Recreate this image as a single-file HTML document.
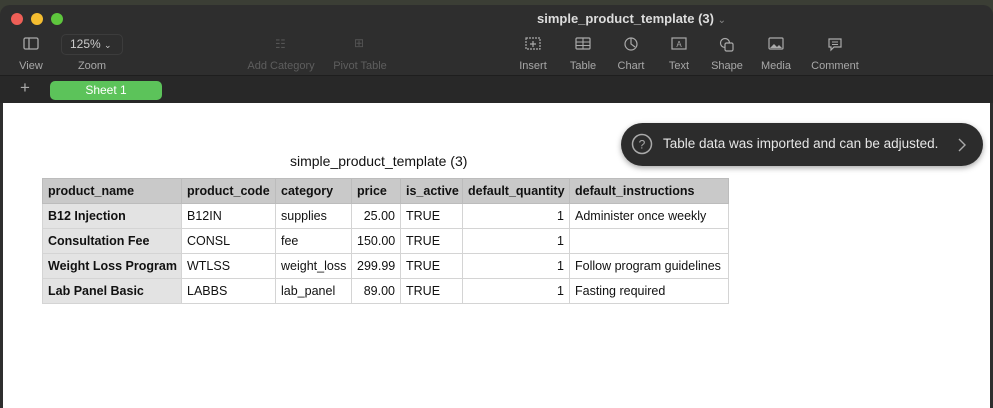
<!DOCTYPE html>
<html><head><style>
*{margin:0;padding:0;box-sizing:border-box}
body{width:993px;height:408px;overflow:hidden;background:#3b3e35;font-family:"Liberation Sans",sans-serif;position:relative}
.win{position:absolute;left:0;top:5px;width:993px;height:403px;background:#2e2e2e;border-radius:10px 10px 0 0;overflow:hidden}
.dot{position:absolute;top:8px;width:12px;height:12px;border-radius:50%}
.title{position:absolute;left:537px;top:6px;color:#ddd;font-weight:bold;font-size:13px}
.lbl{position:absolute;top:55px;font-size:11px;color:#a8a8a8;transform:translateX(-50%);white-space:nowrap}
.lbl.dim{color:#5e5e5e}
.ic{position:absolute;top:32px;transform:translateX(-50%)}
.tabbar{position:absolute;left:0;top:70px;width:993px;height:28px;background:#282828;border-top:1px solid #1e1e1e}
.sheet{position:absolute;left:50px;top:5px;width:112px;height:19px;background:#5cc35a;border-radius:5px;color:#fff;font-size:12px;text-align:center;line-height:19px}
.content{position:absolute;left:3px;top:98px;width:987px;height:310px;background:#fff}
table{position:absolute;left:39px;top:75px;border-collapse:collapse;font-size:12.5px;color:#111;table-layout:fixed;width:686px}
td{height:25px;border:1px solid #d4d4d4;padding:0 5px;white-space:nowrap;overflow:visible}
tr.h td{background:#c9c9c9;font-weight:bold;border-color:#bcbcbc}
td.f{background:#e3e3e3;font-weight:bold}
.r{text-align:right}
.toast{position:absolute;left:618px;top:20px;width:362px;height:43px;background:#2c2c2c;border-radius:22px;box-shadow:0 2px 6px rgba(0,0,0,.35);color:#e6e6e6;font-size:13.5px}
</style></head><body>
<div class="win">
<div class="dot" style="left:11px;background:#ee5f57"></div>
<div class="dot" style="left:31px;background:#f4bd30"></div>
<div class="dot" style="left:51px;background:#5ec63d"></div>
<div class="title">simple_product_template (3) <span style="color:#888;font-weight:normal;font-size:10px">⌄</span></div>
<svg class="ic" style="left:31px" width="16" height="14"><rect x="1" y="1" width="14" height="11" rx="1.5" fill="none" stroke="#aaa" stroke-width="1.3"/><line x1="6" y1="1" x2="6" y2="12" stroke="#aaa" stroke-width="1.3"/></svg>
<div style="position:absolute;left:61px;top:29px;width:62px;height:21px;border:1px solid #3c3c3c;border-radius:5px;color:#ccc;font-size:12px;line-height:19px;padding-left:8px">125% <span style="font-size:9px">⌄</span></div>
<div class="lbl" style="left:31px">View</div><div class="lbl" style="left:92px">Zoom</div>
<div class="lbl dim" style="left:281px">Add Category</div><div class="lbl dim" style="left:360px">Pivot Table</div>
<div style="position:absolute;left:275px;top:32px;color:#555;font-size:12px">☷</div>
<div style="position:absolute;left:354px;top:31px;color:#555;font-size:12px">⊞</div>
<svg class="ic" style="left:533px" width="16" height="14"><rect x="1" y="1" width="14" height="11" fill="none" stroke="#aaa" stroke-width="1.2" stroke-dasharray="2 1"/><path d="M8 4v6M5 7h6" stroke="#aaa" stroke-width="1.2"/></svg>
<svg class="ic" style="left:583px" width="16" height="14"><rect x="1" y="1" width="14" height="11" rx="1" fill="none" stroke="#aaa" stroke-width="1.2"/><path d="M1 5h14M1 8.5h14M8 1v11" stroke="#aaa" stroke-width="1.1"/></svg>
<svg class="ic" style="left:631px" width="16" height="14"><circle cx="8" cy="7" r="6" fill="none" stroke="#aaa" stroke-width="1.2"/><path d="M8 1v6l4 3" fill="none" stroke="#aaa" stroke-width="1.2"/></svg>
<svg class="ic" style="left:679px" width="16" height="14"><rect x="1" y="1" width="14" height="11" fill="none" stroke="#aaa" stroke-width="1.2"/><text x="8" y="10" font-size="8" fill="#aaa" text-anchor="middle" font-family="Liberation Sans">A</text></svg>
<svg class="ic" style="left:727px" width="16" height="16"><circle cx="6" cy="6" r="4.5" fill="none" stroke="#aaa" stroke-width="1.2"/><rect x="6" y="6" width="8" height="8" rx="1.5" fill="#2e2e2e" stroke="#aaa" stroke-width="1.2"/></svg>
<svg class="ic" style="left:776px" width="16" height="14"><rect x="1" y="1" width="14" height="11" rx="1" fill="none" stroke="#aaa" stroke-width="1.2"/><path d="M2 11l4-4 3 3 2-2 3 3z" fill="#aaa"/></svg>
<svg class="ic" style="left:835px" width="16" height="15"><path d="M2 2h12v8H7l-3 3v-3H2z" fill="none" stroke="#aaa" stroke-width="1.2"/><path d="M5 5h6M5 7.5h6" stroke="#aaa"/></svg>
<div class="lbl" style="left:533px">Insert</div><div class="lbl" style="left:583px">Table</div><div class="lbl" style="left:631px">Chart</div><div class="lbl" style="left:679px">Text</div><div class="lbl" style="left:727px">Shape</div><div class="lbl" style="left:776px">Media</div><div class="lbl" style="left:835px">Comment</div>
<div class="tabbar"><div style="position:absolute;left:20px;top:2px;color:#aaa;font-size:17px">+</div><div class="sheet">Sheet 1</div></div>
<div class="content">
<div style="position:absolute;left:287px;top:50px;font-size:14px;color:#111">simple_product_template (3)</div>
<table>
<colgroup><col style="width:139px"><col style="width:94px"><col style="width:76px"><col style="width:49px"><col style="width:62px"><col style="width:107px"><col style="width:159px"></colgroup>
<tr class="h"><td>product_name</td><td>product_code</td><td>category</td><td>price</td><td>is_active</td><td>default_quantity</td><td>default_instructions</td></tr>
<tr><td class="f">B12 Injection</td><td>B12IN</td><td>supplies</td><td class="r">25.00</td><td>TRUE</td><td class="r">1</td><td>Administer once weekly</td></tr>
<tr><td class="f">Consultation Fee</td><td>CONSL</td><td>fee</td><td class="r">150.00</td><td>TRUE</td><td class="r">1</td><td></td></tr>
<tr><td class="f">Weight Loss Program</td><td>WTLSS</td><td>weight_loss</td><td class="r">299.99</td><td>TRUE</td><td class="r">1</td><td>Follow program guidelines</td></tr>
<tr><td class="f">Lab Panel Basic</td><td>LABBS</td><td>lab_panel</td><td class="r">89.00</td><td>TRUE</td><td class="r">1</td><td>Fasting required</td></tr>
</table>
<div class="toast">
<svg style="position:absolute;left:10px;top:10px" width="22" height="22"><circle cx="11" cy="11" r="9.5" fill="none" stroke="#aaa" stroke-width="1.5"/><text x="11" y="15.5" font-size="12" fill="#aaa" text-anchor="middle" font-family="Liberation Sans">?</text></svg>
<div style="position:absolute;left:42px;top:13px">Table data was imported and can be adjusted.</div>
<svg style="position:absolute;left:336px;top:15px" width="10" height="14"><path d="M2 1l6 6-6 6" fill="none" stroke="#aaa" stroke-width="1.4"/></svg>
</div>
</div>
</div>
</body></html>
